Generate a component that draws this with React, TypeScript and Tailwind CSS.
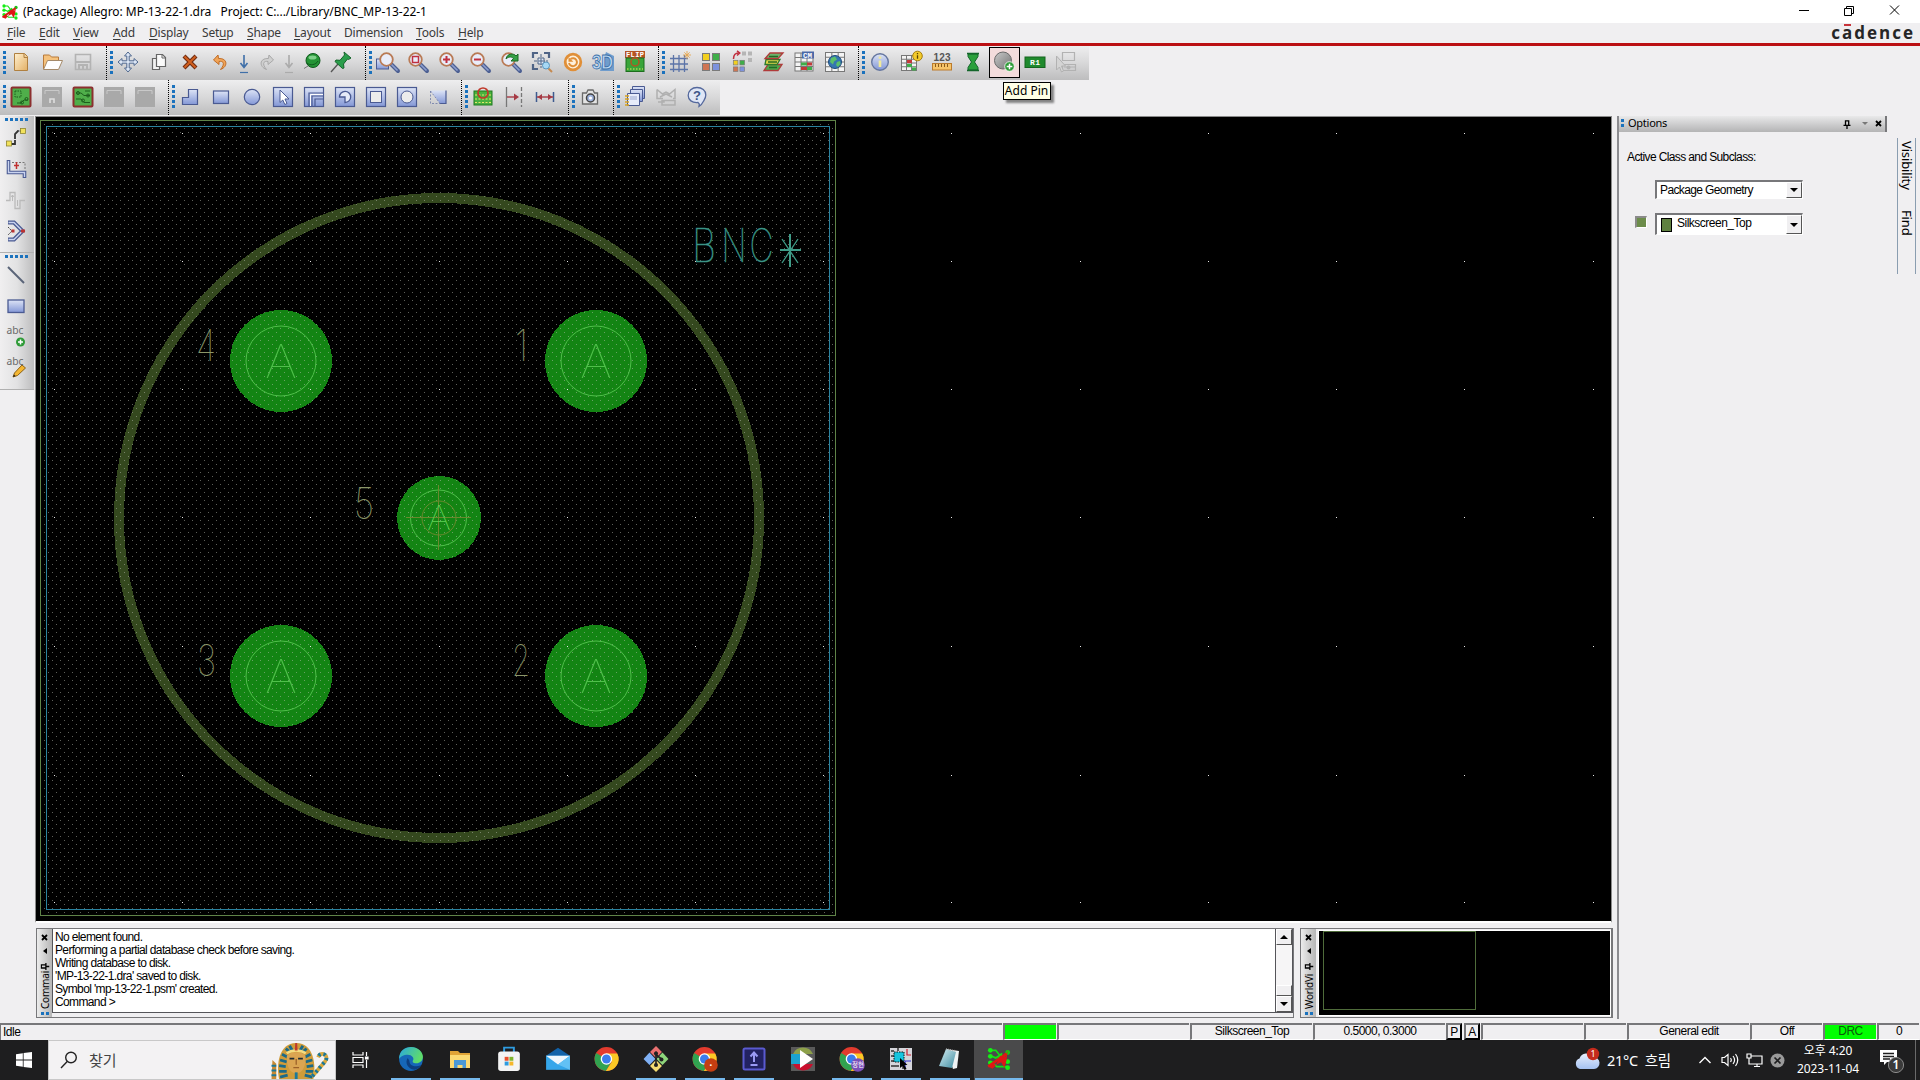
import React from "react";

type Kids = { children?: React.ReactNode };

/* ---------- shared icon scaffolding ---------- */

function Svg({ children, s = 24 }: Kids & { s?: number }) {
  return (
    <svg width={s} height={s} viewBox="0 0 24 24" fill="none" className="block shrink-0 overflow-visible">
      {children}
    </svg>
  );
}

const Defs = () => (
  <svg width="0" height="0" className="absolute">
    <defs>
      <linearGradient id="blu" x1="0" y1="0" x2="0" y2="1">
        <stop offset="0" stopColor="#dde4f6" />
        <stop offset="1" stopColor="#8397d6" />
      </linearGradient>
      <linearGradient id="tan" x1="0" y1="0" x2="1" y2="1">
        <stop offset="0" stopColor="#fff0cf" />
        <stop offset="1" stopColor="#e3b066" />
      </linearGradient>
      <linearGradient id="gry" x1="0" y1="0" x2="1" y2="1">
        <stop offset="0" stopColor="#c9c9c9" />
        <stop offset="1" stopColor="#757575" />
      </linearGradient>
      <linearGradient id="edge" x1="0" y1="0" x2="1" y2="0.4">
        <stop offset="0" stopColor="#2aa7e0" />
        <stop offset="1" stopColor="#5fdc6a" />
      </linearGradient>
      <linearGradient id="note" x1="0" y1="0" x2="1" y2="1">
        <stop offset="0" stopColor="#d7f0f5" />
        <stop offset="1" stopColor="#3e8ca0" />
      </linearGradient>
      <linearGradient id="cloud" x1="0" y1="0" x2="0" y2="1">
        <stop offset="0" stopColor="#e9f0fd" />
        <stop offset="1" stopColor="#a5c2f2" />
      </linearGradient>
    </defs>
  </svg>
);

const B = "#4a5a92";

const Lens = ({ children }: Kids) => (
  <>
    <path d="M14.5 14.5L21 21" stroke="#4c5f92" strokeWidth="4" strokeLinecap="round" />
    <path d="M14.5 14.5L20.5 20.5" stroke="#8ea0cf" strokeWidth="1.6" />
    <circle cx="9.5" cy="9.5" r="6.3" fill="#e9edfa" stroke="#b97a55" strokeWidth="1.8" />
    {children}
  </>
);

const Board = ({ children }: Kids) => (
  <Svg>
    <rect x="2.5" y="2.5" width="19" height="19" rx="1" fill="#4fae4a" stroke="#8c2f2f" strokeWidth="2" />
    {children}
  </Svg>
);

const Gone = ({ children }: Kids) => (
  <Svg>
    <rect x="2" y="2" width="20" height="20" fill="#a9a9a9" />
    <path d="M5 9V5.5h14V9" stroke="#c9c9c9" />
    {children}
  </Svg>
);

const Tile = ({ children }: Kids) => (
  <Svg>
    <rect x="2.5" y="2.5" width="19" height="19" fill="url(#blu)" stroke={B} strokeWidth="1.2" />
    {children}
  </Svg>
);

const Table = ({ x = 3, y = 3, n = 18 }) => (
  <>
    <rect x={x} y={y} width={n} height={n} fill="#f4f4f4" stroke="#777" />
    <path
      d={`M${x} ${y + n / 4}h${n}M${x} ${y + n / 2}h${n}M${x} ${y + (3 * n) / 4}h${n}M${x + n / 3} ${y}v${n}M${x + (2 * n) / 3} ${y}v${n}`}
      stroke="#777"
    />
  </>
);

const Chip = ({ s = 24 }: { s?: number }) => (
  <Svg s={s}>
    <path d="M4 4h5l4 5h5M4 9l5 2 6-4M4 15h4l5-5M5 15l5 4h9M12 13l7 2" stroke="#14e014" strokeWidth="1.6" />
    <circle cx="4" cy="4" r="2.2" fill="#14f014" />
    <circle cx="4" cy="9.5" r="2.2" fill="#14f014" />
    <circle cx="4" cy="15.5" r="2.2" fill="#14f014" />
    <circle cx="20" cy="6" r="2.2" fill="#14c814" />
    <circle cx="20" cy="14.5" r="2.2" fill="#14f014" />
    <circle cx="20" cy="20" r="2.2" fill="#14f014" />
    <path d="M2 19l4-4 3 3 4-9 5 1 2-6-1 9-2 7-3-5-4 2-4 4z" fill="#e01515" />
    <path d="M2 19l17-12" stroke="#e01515" strokeWidth="2.4" />
  </Svg>
);

/* ---------- top toolbar icons ---------- */

const row1a = [
  <Svg><path d="M5.500 3.500h10l3 3v14h-13z" fill="url(#tan)" stroke="#b08040" /><path d="M15 3.500v4h4" stroke="#b08040" /></Svg>,
  <Svg><path d="M3.500 19V5h6l2 2h7v4" fill="#f5c27d" stroke="#b97a3a" /><path d="M3.500 19.500l4-9h15l-4 9z" fill="#fff" stroke="#a58a6a" /></Svg>,
  <Svg><path d="M4.500 4.500h15v15h-15z" stroke="#b3b3b3" strokeWidth="1.6" /><path d="M5 12h14M8 19v-4h8v4M12 16v3" stroke="#b3b3b3" strokeWidth="2" /></Svg>,
];

const moveIcon = (
  <Svg>
    <path d="M12 2l3.500 4h-2.300v4.800H18V8.500l4 3.500-4 3.500v-2.300h-4.800V18h2.300L12 22l-3.500-4h2.300v-4.800H6v2.300L2 12l4-3.500v2.300h4.800V6H8.500z" fill="#dce6f5" stroke="#50698f" />
  </Svg>
);
const copyIcon = (
  <Svg>
    <path d="M5.500 8.500h7v11h-7z" fill="#f2f2f2" stroke="#666" strokeWidth="1.200" />
    <path d="M9.500 4.500h6l3 3v9h-9z" fill="#fafafa" stroke="#666" strokeWidth="1.200" />
    <path d="M15 5v3h3" stroke="#666" />
  </Svg>
);
const deleteIcon = (
  <Svg>
    <path d="M6 6l12 12M18 6L6 18" stroke="#6f2a10" strokeWidth="4.200" />
    <path d="M6.500 6.500l11 11M17.500 6.500l-11 11" stroke="#d2601f" strokeWidth="2" />
  </Svg>
);
const Curl = ({ flip = false }) => (
  <Svg>
    <g transform={flip ? "translate(24 0) scale(-1 1)" : undefined}>
      <path d="M9 5L4.500 10 10 14.500v-3c5-1 6 3 1.500 8C19 17 19 8 9.500 8.500z" fill={flip ? "#cfcfcf" : "#f0a458"} stroke={flip ? "#a8a8a8" : "#c06c26"} />
    </g>
  </Svg>
);
const Drop = ({ c = "#3f6fa8" }) => (
  <Svg>
    <path d="M12 5v12M8.500 13l3.500 4.500 3.500-4.500" stroke={c} strokeWidth="1.600" />
    <path d="M8 22.500h8" stroke={c} strokeWidth="1.200" />
  </Svg>
);
const pinRound = (
  <Svg>
    <circle cx="13" cy="10.500" r="7" fill="#249435" stroke="#0f5a1d" />
    <ellipse cx="12.500" cy="7.500" rx="4" ry="2" fill="#7fd08a" />
    <path d="M7 13c3 3 9 2 11-2" stroke="#0f5a1d" />
    <path d="M8 16l-4 2.500" stroke="#777" />
  </Svg>
);
const pinSlant = (
  <Svg>
    <path d="M9 14L2 22" stroke="#555" strokeWidth="1.400" />
    <path d="M15 2l7 6-2.500 1.500-1-.5-4 5 .5 4-1.500.5-7.500-7 1-1.500 4 .3L15.500 5z" fill="#2a9d4b" stroke="#14642a" />
  </Svg>
);

const zoomIcons = [
  <Svg><rect x="1.500" y="9" width="12" height="10" fill="url(#blu)" stroke={B} /><g transform="translate(2 0)"><Lens /></g></Svg>,
  <Svg><Lens><rect x="6.500" y="6.500" width="6" height="6" stroke="#c03040" strokeWidth="1.500" /></Lens></Svg>,
  <Svg><Lens><path d="M9.500 6v7M6 9.500h7" stroke="#c03040" strokeWidth="2" /></Lens></Svg>,
  <Svg><Lens><path d="M6 9.500h7" stroke="#c03040" strokeWidth="2" /></Lens></Svg>,
  <Svg><Lens /><path d="M3 10c1-6 8-6 10-3l2-2v7H8l2.500-2.500C8 7 5 8 3 10z" fill="#35a045" stroke="#186a25" transform="translate(4 -1)" /></Svg>,
  <Svg>
    <path d="M3 8V3h5M14 3h5v5M3 14v5h5" stroke="#4f6486" strokeWidth="2.200" />
    <path d="M11 4v14M4 11h14" stroke="#4f6486" strokeWidth="1" strokeDasharray="3 1" />
    <path d="M8 8h6v6H8z" fill="#dfe8f5" stroke="#4f6486" /><path d="M11 8.500v5M8.500 11h5" stroke="#4f6486" />
    <path d="M18 18l4 4" stroke="#c58a50" strokeWidth="2" /><circle cx="16" cy="15.500" r="3.500" fill="#a6d8f5" stroke="#5b95bd" />
  </Svg>,
  <Svg>
    <circle cx="12" cy="12" r="7.800" fill="#fdf0dc" stroke="#e08f38" strokeWidth="2.800" />
    <path d="M9.500 9a4 4 0 1 1-1.500 4" stroke="#e08f38" strokeWidth="1.900" /><path d="M7.500 7v4.800h4.800z" fill="#e08f38" />
  </Svg>,
  <Svg>
    <path d="M14 2l8 4v15H8z" fill="#6f9ccc" />
    <text x="0" y="19" fontSize="20" fontWeight="700" fontFamily="Liberation Sans, sans-serif" textLength="21" lengthAdjust="spacingAndGlyphs" fill="#bcd8f2" stroke="#3c70a8" strokeWidth="0.900">3D</text>
  </Svg>,
  <Svg>
    <rect x="2" y="1" width="20" height="7" fill="#b55424" />
    <text x="3" y="7.200" fontSize="7" fontWeight="700" fontFamily="Liberation Mono, monospace" textLength="18" fill="#fff">FLIP</text>
    <rect x="3" y="8" width="18" height="13.500" fill="#3aa53a" stroke="#1d6e1d" />
    <circle cx="12" cy="12" r="4" stroke="#b55424" strokeWidth="1.500" /><path d="M4 19h16" stroke="#e8e85a" strokeDasharray="1.500 1.500" />
  </Svg>,
];

const Squares = () => (
  <>
    <rect x="3.500" y="3.500" width="7" height="7" fill="#f2cf1e" stroke="#7a7a7a" />
    <rect x="13.500" y="3.500" width="7" height="7" fill="#3fae49" stroke="#7a7a7a" />
    <rect x="3.500" y="13.500" width="7" height="7" fill="#cf7552" stroke="#7a7a7a" />
    <rect x="13.500" y="13.500" width="7" height="7" fill="#7d92dd" stroke="#7a7a7a" />
  </>
);

const gridIcons = [
  <Svg><path d="M2 8.500h18M2 14h18M2 19.500h18M5.500 5v17M11 5v17M16.500 5v17" stroke="#5c74a8" strokeWidth="1.300" /><path d="M19 1v8M15 5h8M16.300 2.300l5.400 5.400M21.700 2.300l-5.400 5.400" stroke="#e8a850" strokeWidth="0.900" /></Svg>,
  <Svg><Squares /></Svg>,
  <Svg>
    <g transform="translate(1 8) scale(.66)"><Squares /></g>
    <path d="M12 1.500h4v4h-4zM18 1.500h4v4h-4zM18 8h4v4h-4z" fill="#b5b5b5" />
    <path d="M3.500 9c0-4 2-6 5-6M7 .8L9.800 3 7 5.500" stroke="#c03040" strokeWidth="1.500" />
  </Svg>,
  <Svg>
    <path d="M7 14.500h14l-4 6H3z" fill="#4da74d" stroke="#b03a3a" strokeWidth="1.300" />
    <path d="M5 9.500h14l-3 5H4z" fill="#e4d64a" stroke="#2c7a2c" strokeWidth="1.300" />
    <path d="M9 3h13l-5 5.500H4z" fill="#6db36d" stroke="#b03a3a" strokeWidth="1.300" />
    <path d="M8 6.500h9M7 12h9M8 17.500h8" stroke="#226a22" strokeWidth="1.300" />
  </Svg>,
  <Svg>
    <Table />
    <rect x="10" y="1.500" width="12" height="7" fill="#4a68a8" />
    <text x="11" y="7.800" fontSize="7.500" fontWeight="700" fontFamily="Liberation Mono, monospace" fill="#fff">CM</text>
    <path d="M9 12.500h6v3H9zM15 17h5v3h-5z" fill="#3fae49" /><path d="M15 12.500h5v3h-5zM9 17h6v3H9z" fill="#c23a3a" />
  </Svg>,
  <Svg><Table x={2.5} y={2.5} n={19} /><circle cx="12" cy="12" r="6.500" fill="#3576b0" stroke="#1d4b7c" /><path d="M8 8l4-1.500 2 3-3 2-1 3-3-2.500zM14 12l3-1 .5 3-2.500 3-2-2z" fill="#5cc06a" /></Svg>,
];

const infoBadge = (
  <>
    <circle cx="18.500" cy="6" r="4.800" fill="#f3cb2b" stroke="#a57e10" />
    <path d="M18.500 5.300v3.500M18.500 3v1.300" stroke="#5a4300" strokeWidth="1.300" />
  </>
);

const infoIcons = [
  <Svg><circle cx="12" cy="12" r="8.300" fill="url(#blu)" stroke="#66779f" strokeWidth="1.400" /><path d="M12 10.500v6.500M12 6.500v2.300" stroke="#f1ea9a" strokeWidth="2.600" /></Svg>,
  <Svg><Table x={2.500} y={5.500} n={15} /><path d="M8 14h5v3H8zM13 17.500h4v3h-4z" fill="#3fae49" /><path d="M8 10h5v3H8z" fill="#c23a3a" />{infoBadge}</Svg>,
  <Svg>
    <text x="3.500" y="11" fontSize="10" fontWeight="700" fontFamily="Liberation Sans, sans-serif" textLength="17" fill="#555">123</text>
    <rect x="2.500" y="13.500" width="19" height="6.500" fill="#f7c469" stroke="#bb7b2c" /><path d="M5.500 14v3M8.500 14v3M11.500 14v3M14.500 14v3M17.500 14v3" stroke="#8a5a1c" />
  </Svg>,
  <Svg><path d="M7 4h10v2.500L13.500 12l3.500 5.500V20H7v-2.500L10.500 12 7 6.500z" fill="#2aa03c" stroke="#13662a" /><path d="M6 3.500h12M6 20.500h12" stroke="#13662a" strokeWidth="1.600" /></Svg>,
];

const addPinIcon = (
  <Svg>
    <circle cx="11" cy="10.500" r="8.500" fill="url(#gry)" stroke="#6a6a6a" />
    <circle cx="17.500" cy="16.500" r="4.800" fill="#2f9b38" stroke="#fff" strokeWidth="0.800" />
    <path d="M17.500 13.700v5.600M14.700 16.500h5.600" stroke="#fff" strokeWidth="1.500" />
  </Svg>
);
const refdesIcon = (
  <Svg>
    <rect x="2" y="7" width="20" height="10.500" fill="#1f8a2d" stroke="#15651f" />
    <text x="7" y="15" fontSize="8" fontWeight="700" fontFamily="Liberation Mono, monospace" textLength="10" fill="#fff">R1</text>
  </Svg>
);
const hdlIcon = (
  <Svg>
    <path d="M8.500 2.500h12v8h-12zM8.500 14.500h13v6h-13z" stroke="#b2b2b2" strokeWidth="1.200" />
    <path d="M2.500 6v14l3-3 2 5 2-1-2-5h4zM10 17h11" fill="#d4d4d4" stroke="#b2b2b2" /><circle cx="14.500" cy="17.500" r="2" fill="#b2b2b2" />
  </Svg>
);

/* ---------- second toolbar icons ---------- */

const modeIcons = [
  <Board><path d="M6 6h6v6H6z" stroke="#1d5f1d" strokeDasharray="1.500 1" /><path d="M8 18h4l3-3h4" stroke="#1d5f1d" /><circle cx="13" cy="17.500" r="1.500" stroke="#1d5f1d" /><circle cx="17.500" cy="14" r="1.500" stroke="#1d5f1d" /></Board>,
  <Gone><path d="M10 18v-4h4v4" stroke="#dedede" strokeWidth="1.600" /></Gone>,
  <Board><path d="M5 8h5l3 2.500h6M5 14h5l3 3.500h6M14 6h5" stroke="#1d5f1d" /><circle cx="7" cy="8" r="1.500" stroke="#1d5f1d" /><circle cx="17" cy="10.500" r="1.500" stroke="#1d5f1d" /><circle cx="12" cy="15.500" r="1.500" stroke="#1d5f1d" /></Board>,
  <Gone />,
  <Gone />,
];

const shapeIcons = [
  <Svg><path d="M4.500 19.500v-7h6v-8h9v15z" fill="url(#blu)" stroke={B} strokeWidth="1.200" /></Svg>,
  <Svg><rect x="4.500" y="6" width="15" height="12.500" fill="url(#blu)" stroke={B} strokeWidth="1.200" /></Svg>,
  <Svg><circle cx="12" cy="12" r="7.700" fill="url(#blu)" stroke={B} strokeWidth="1.200" /></Svg>,
  <Tile><path d="M9 5v12.500l2.800-2.500 2 4.500 2.200-1-2-4.500H18z" fill="#fff" stroke={B} /></Tile>,
  <Tile><path d="M7 21V8h14M10 21V11h11M13 21v-7h8" stroke={B} strokeWidth="1.200" /><path d="M8.500 21V9.500H21" stroke="#fff" /></Tile>,
  <Tile><path d="M12 12H6.500a5.600 5.600 0 1 1 5.500 5.500z" fill="#e6ebf8" stroke={B} strokeWidth="1.300" /></Tile>,
  <Tile><rect x="6.500" y="6.500" width="11" height="11" fill="#ececec" stroke={B} /></Tile>,
  <Tile><circle cx="12" cy="12" r="6" fill="#ececec" stroke={B} /></Tile>,
  <Svg><path d="M4.500 5.500h15.500v13H14z" fill="url(#blu)" /><path d="M20 5.500v13h-6" stroke={B} strokeWidth="1.200" /><path d="M4.500 6v12.500H14M4.500 6l9.500 12.500" stroke="#6d7aa6" strokeWidth="0.800" strokeDasharray="2 1.500" /></Svg>,
];

const dimIcons = [
  <Svg><rect x="3" y="6" width="18" height="14" fill="#49b13f" stroke="#1f7a1f" /><path d="M4 17.500h16M4 10h16M4 14h16" stroke="#e3e86a" strokeDasharray="2 1.500" /><circle cx="12" cy="8" r="5" stroke="#c0392b" strokeWidth="1.700" /></Svg>,
  <Svg><path d="M4.500 2v20" stroke="#777" strokeWidth="1.300" /><path d="M19.500 2v20" stroke="#777" strokeWidth="1.300" strokeDasharray="4 2" /><path d="M5 12h10" stroke="#a63a44" strokeWidth="1.400" /><path d="M12 8.500l5 3.500-5 3.500z" fill="#a63a44" /></Svg>,
  <Svg><path d="M3.500 7v10M20.500 7v10" stroke="#3d5a8e" strokeWidth="1.500" /><path d="M4 12h16" stroke="#a63a44" strokeWidth="1.400" /><path d="M9 9l-4.500 3L9 15zM15 9l4.500 3-4.500 3z" fill="#a63a44" /></Svg>,
];

const cameraIcon = (
  <Svg><path d="M4.500 8h4l1.500-3h5l1.500 3h3v11h-15z" fill="#e3e3e3" stroke="#6b6b6b" strokeWidth="1.300" /><circle cx="12.500" cy="13" r="4" fill="#9fb3dc" stroke="#444" strokeWidth="1.500" /><circle cx="12.500" cy="13" r="1.600" fill="#fff" /></Svg>
);

const helpIcons = [
  <Svg>
    <path d="M9.500 1.500h12v12h-12z" fill="url(#blu)" stroke={B} /><path d="M7.500 4.500h12v12h-12z" fill="url(#blu)" stroke={B} />
    <path d="M4.500 8.500h12v12h-12z" fill="#e6ebfa" stroke={B} /><path d="M7 12h7M7 14h7" stroke="#9aa7cf" /><path d="M2 11h4M2 14h4M2 17h4M2 20h4" stroke="#d9a21e" strokeWidth="1.600" />
  </Svg>,
  <Svg><path d="M3 4.500v9h6M3 4.500l5.500 4.500L12 7l3.500 2L21 4.500v9h-2M6 12l6-3 6 3" stroke="#b0b0b0" strokeWidth="1.500" /><path d="M4 17h6v-2M8 15.500h13V20H8z" stroke="#b0b0b0" strokeWidth="1.500" /></Svg>,
  <Svg><path d="M12 2.500c5 0 8.800 3 8.800 7.500 0 3-1 4-2.500 6.500-1 2-2 4-4.300 5 .8-2 .5-3-1-4C7 18 3.200 15 3.200 10.500 3.200 6 7 2.500 12 2.500z" fill="#dfe6f6" stroke="#54689c" strokeWidth="1.300" /><text x="8" y="15" fontSize="13" fontWeight="700" fontFamily="Liberation Sans, sans-serif" fill="#3c5488">?</text></Svg>,
];

/* ---------- left toolbar icons ---------- */

const Abc = () => (
  <text x="2.500" y="9" fontSize="10.500" fontFamily="Noto Sans, sans-serif" fill="#6a6a6a" textLength="17" lengthAdjust="spacingAndGlyphs">abc</text>
);

const routeIcons = [
  <Svg><path d="M5 18h6V8l3-3h7" stroke="#333" strokeWidth="1.800" strokeDasharray="10 1" /><rect x="2.500" y="15" width="5" height="5" fill="#f2e25c" stroke="#8f8530" strokeWidth="0.800" /><rect x="16.500" y="2.500" width="5" height="5" fill="#f2e25c" stroke="#8f8530" strokeWidth="0.800" /></Svg>,
  <Svg><path d="M4.500 3v12.500h16V21" stroke={B} strokeWidth="3.600" /><path d="M4.500 4v11.500h16V20" stroke="#c9d3f0" strokeWidth="1.400" /><path d="M8 5.500h13v7" stroke="#777" strokeDasharray="2 1.500" /><path d="M12.500 5v7M10 8.500h5" stroke="#c03030" strokeWidth="1.500" /></Svg>,
  <Svg><path d="M2 12.500h4V4.500h5v16h5v-8h5" stroke="#bababa" strokeWidth="1.300" /><path d="M8.500 13V7M7 9l1.500-2L10 9M13.500 12v6" stroke="#bababa" /></Svg>,
  <Svg><path d="M4 3.500h6l8.500 8.500L10 20.500H4" stroke={B} strokeWidth="4" /><path d="M4.500 3.500H10l8.500 8.500L10 20.500H4.500" stroke="#c9d3f0" strokeWidth="1.400" /><path d="M4 8l4 4-4 4" stroke="#444" strokeDasharray="2 1" /><rect x="7.500" y="10.500" width="3" height="3" fill="#b33" /><rect x="17" y="10.500" width="4" height="3" fill="#b33" /></Svg>,
];

const drawIcons = [
  <Svg><path d="M4 4l16 16" stroke="#5a6478" strokeWidth="2" /></Svg>,
  <Svg><rect x="4" y="6" width="16" height="12.500" fill="url(#blu)" stroke={B} strokeWidth="1.300" /></Svg>,
  <Svg><Abc /><circle cx="16.500" cy="17" r="4.500" fill="#2f9b38" /><path d="M16.500 14.500v5M14 17h5" stroke="#fff" strokeWidth="1.500" /></Svg>,
  <Svg><Abc /><path d="M9 21l1.500-4L18 9l3.500 3-8 7.500z" fill="#f5b732" stroke="#8c6114" /><path d="M9 21l1-2.500 1.500 1.500z" fill="#222" /></Svg>,
];

/* ---------- toolbar layout ---------- */

function Slot({ children, w = "w-[31px]" }: Kids & { w?: string }) {
  return <div className={`flex h-full shrink-0 items-center justify-center ${w}`}>{children}</div>;
}

const Grip = () => (
  <div className="flex h-full w-[5.5px] shrink-0 flex-col items-start justify-center gap-[2px] pl-[3px]">
    {[0, 1, 2, 3, 4].map((i) => (
      <div key={i} className="h-[3px] w-[3px] bg-[#1b72bd]" />
    ))}
  </div>
);

function Group({ children, w, last = false }: Kids & { w: string; last?: boolean }) {
  return (
    <div className={`flex h-full shrink-0 items-center pb-[2px] ${w} ${last ? "" : "border-r border-dotted border-black"}`}>
      <Grip />
      {children}
    </div>
  );
}

const bar = "flex bg-gradient-to-b from-[#eeeeef] via-[#d8d8d9] to-[#bdbdbe]";

const VGroup = ({ icons, h }: { icons: React.ReactNode[]; h: string }) => (
  <div className={`flex w-[34px] flex-col border-b border-[#b0b0b0] bg-gradient-to-r from-[#f0eff0] via-[#e2e2e3] to-[#bdbdbe] ${h}`}>
    <div className="flex h-[6px] shrink-0 items-center gap-[2px] pl-[5px]">
      {[0, 1, 2, 3, 4].map((i) => (
        <div key={i} className="h-[3px] w-[3px] bg-[#1b72bd]" />
      ))}
    </div>
    {icons.map((ic, i) => (
      <div key={i} className="flex h-[31px] w-[31px] shrink-0 items-center justify-center">{ic}</div>
    ))}
  </div>
);

/* ---------- design canvas ---------- */

function Label({ x, y, w, h, c, children }: { x: number; y: number; w: number; h: number; c: string; children: string }) {
  return (
    <text x={x} y={y} fontFamily="Inter, sans-serif" fontWeight={100} fontSize={h / 0.727} textLength={w} lengthAdjust="spacingAndGlyphs" fill={c}>
      {children}
    </text>
  );
}

const minorX = [54, 182, 310, 439, 567, 695, 823, 951, 1080, 1208, 1336, 1464, 1593];
const minorY = [133, 261, 389, 517, 646, 775, 902];
const pads = [
  { n: "4", x: 281, y: 361, lx: 196, lw: 20 },
  { n: "1", x: 596, y: 361, lx: 515, lw: 13 },
  { n: "3", x: 281, y: 676, lx: 197, lw: 19 },
  { n: "2", x: 596, y: 676, lx: 512, lw: 18 },
];

const Canvas = () => (
  <svg width="1575" height="804" viewBox="36 117 1575 804" className="block bg-black">
    <defs>
      <pattern id="dots" width="8" height="8" patternUnits="userSpaceOnUse">
        <rect x="0" y="0" width="1" height="1" fill="#bcc0b4" fillOpacity="0.5" />
        <rect x="4" y="4" width="1" height="1" fill="#bcc0b4" fillOpacity="0.5" />
      </pattern>
    </defs>
    <circle cx="439" cy="518" r="320" fill="none" stroke="#34481e" strokeWidth="10" shapeRendering="crispEdges" />
    {pads.map((p) => (
      <circle key={p.n} cx={p.x} cy={p.y} r="51" fill="#138413" shapeRendering="crispEdges" />
    ))}
    <circle cx="439" cy="518" r="42" fill="#138413" shapeRendering="crispEdges" />
    <rect x="41" y="121" width="794" height="794" fill="url(#dots)" shapeRendering="crispEdges" />
    <rect x="40.500" y="120.500" width="795" height="795" fill="none" stroke="#5f8348" />
    <rect x="46.500" y="126.500" width="783" height="783" fill="none" stroke="#2a83a0" />
    {minorY.map((y) => minorX.map((x) => <rect key={`${x}-${y}`} x={x} y={y} width="1" height="1" fill="#e8e8e8" />))}
    {pads.map((p) => (
      <g key={p.n}>
        <circle cx={p.x} cy={p.y} r="35" fill="none" stroke="#4fc04a" />
        <Label x={p.x - 16} y={p.y + 17} w={32} h={34} c="#4fc04a">A</Label>
        <g stroke="#8a9668" strokeWidth="0.200">
          <Label x={p.lx} y={p.y} w={p.lw} h={32} c="#8a9668">{p.n}</Label>
        </g>
      </g>
    ))}
    <circle cx="438.500" cy="518" r="28" fill="none" stroke="#4fc04a" />
    <circle cx="439" cy="518" r="17" fill="none" stroke="#6a8a2e" />
    <path d="M406 517.500h65M438.500 485v65" stroke="#6a8a2e" />
    <Label x={427} y={530} w={24} h={25} c="#5fd055">A</Label>
    <g stroke="#8a9668" strokeWidth="0.200">
      <Label x={354} y={519} w={20} h={32} c="#8a9668">5</Label>
    </g>
    <g stroke="#2f8a80" strokeWidth="0.600">
      <text y="262" fontFamily="Inter, sans-serif" fontWeight={100} fontSize="46" fill="#4aa08e">
        <tspan x="692" textLength="24" lengthAdjust="spacingAndGlyphs">B</tspan>
        <tspan x="721.500" textLength="25" lengthAdjust="spacingAndGlyphs">N</tspan>
        <tspan x="749.500" textLength="24" lengthAdjust="spacingAndGlyphs">C</tspan>
      </text>
    </g>
    <path d="M790 234v33M780 250h21" stroke="#3f9c88" strokeWidth="2" />
    <path d="M782 239l16 24M798 239l-16 24" stroke="#3f9c88" strokeWidth="1.300" />
  </svg>
);

/* ---------- lower docks ---------- */

const PinGlyph = () => (
  <svg width="8" height="9" viewBox="0 0 8 9" stroke="#000" strokeWidth="1.300" fill="none"><path d="M2.500 5V.8h3.200V5M.5 5.400h7M4 5v4" /></svg>
);
const CloseGlyph = () => (
  <svg width="7" height="7" viewBox="0 0 7 7" stroke="#000" strokeWidth="1.800"><path d="M1 1l5 5M6 1L1 6" /></svg>
);

const DockStrip = ({ label }: { label: string }) => (
  <div className="flex w-[15px] shrink-0 flex-col items-center bg-gradient-to-r from-[#ececec] to-[#b6b6b6] pt-[5px]">
    <CloseGlyph />
    <div className="mt-[7px] h-0 w-0 border-y-[3px] border-r-[4px] border-y-transparent border-r-black" />
    <div className="mt-[8px] -rotate-90"><PinGlyph /></div>
    <div className="mt-px flex h-[37px] w-[14px] rotate-180 items-center whitespace-nowrap text-[10px] leading-[14px] tracking-[-0.2px] [writing-mode:vertical-rl]">{label}</div>
    <div className="mt-[3px] flex gap-[2px]">
      <div className="h-[3px] w-[3px] bg-[#1b72bd]" />
      <div className="h-[3px] w-[3px] bg-[#1b72bd]" />
    </div>
  </div>
);

const raised = "border border-t-white border-l-white border-r-[#555] border-b-[#555] bg-[#f0eff1]";

const Command = () => (
  <div className="flex h-[90px] w-[1258px] border border-[#77777a] bg-[#f0eff1]">
    <DockStrip label="Commai" />
    <div className="flex h-[84px] flex-1 border border-t-0 border-[#55555a] bg-white">
      <div className="flex-1 pl-[2px] pt-[2px] font-['Liberation_Sans',sans-serif] text-[12px] leading-[13px] tracking-[-0.63px] text-black">
        {["No element found.", "Performing a partial database check before saving.", "Writing database to disk.", "'MP-13-22-1.dra' saved to disk.", "Symbol 'mp-13-22-1.psm' created.", "Command >"].map((l) => (
          <div key={l}>{l}</div>
        ))}
      </div>
      <div className="flex w-[17px] flex-col border-l border-[#55555a] bg-[#f6f5f6]">
        <div className={`flex h-[16px] items-center justify-center ${raised}`}><div className="h-0 w-0 border-x-[4px] border-b-[4px] border-x-transparent border-b-black" /></div>
        <div className="flex-1" />
        <div className={`h-[11px] ${raised}`} />
        <div className={`flex h-[16px] items-center justify-center ${raised}`}><div className="h-0 w-0 border-x-[4px] border-t-[4px] border-x-transparent border-t-black" /></div>
      </div>
    </div>
  </div>
);

const WorldView = () => (
  <div className="flex h-[90px] w-[313px] border border-r-2 border-[#77777a] bg-[#f0eff1]">
    <DockStrip label="WorldVi" />
    <div className="ml-[2px] mt-[1px] h-[86px] flex-1 border border-white bg-black">
      <div className="ml-[4px] h-[79px] w-[153px] border border-[#4f6c3a]" />
    </div>
  </div>
);

/* ---------- options dock ---------- */

const Combo = ({ children, h }: Kids & { h: string }) => (
  <div className={`flex w-[148px] border border-t-2 border-l-2 border-[#77777a] border-r-white border-b-white bg-white ${h}`}>
    <div className="flex flex-1 items-center pl-[2px]">{children}</div>
    <div className={`flex w-[16px] items-center justify-center ${raised}`}>
      <div className="h-0 w-0 border-x-[4px] border-t-[4px] border-x-transparent border-t-black" />
    </div>
  </div>
);

const Options = () => (
  <div className="flex h-[903px] w-[302px] border-l-2 border-[#8c8c90] font-['Liberation_Sans',sans-serif] text-[12px] text-black">
    <div className="w-[268px]">
      <div className="flex h-[16px] items-center border-r-2 border-[#77777a] bg-gradient-to-b from-[#e9e9ea] to-[#b4b4b5] pb-[2px] pl-[2px]">
        <div className="flex flex-col gap-[2px]">
          <div className="h-[3px] w-[3px] bg-[#1b72bd]" />
          <div className="h-[3px] w-[3px] bg-[#1b72bd]" />
        </div>
        <span className="ml-[4px] font-['Noto_Sans',sans-serif] text-[11px] leading-[12px] tracking-[-0.25px]">Options</span>
        <div className="ml-auto mt-[3px]"><PinGlyph /></div>
        <div className="ml-[11px] h-0 w-0 border-x-[3px] border-t-[3px] border-x-transparent border-t-[#777]" />
        <div className="ml-[7px] mr-[3px]"><CloseGlyph /></div>
      </div>
      <div className="mt-[17px] pl-[8px] leading-[16px] tracking-[-0.62px]">Active Class and Subclass:</div>
      <div className="mt-[15px] pl-[36px]">
        <Combo h="h-[19px]"><span className="pl-px tracking-[-0.62px]">Package Geometry</span></Combo>
      </div>
      <div className="mt-[14px] flex pl-[16px]">
        <div className="mr-[8px] mt-[3px] h-[12px] w-[12px] border-2 border-r border-b border-[#8a8a8a] border-r-white border-b-white bg-[#6c8c4a]" />
        <Combo h="h-[22px]">
          <div className="ml-[2px] h-[14px] w-[11px] border border-black bg-[#5f8040]" />
          <span className="-mt-[3px] ml-[5px] tracking-[-0.5px]">Silkscreen_Top</span>
        </Combo>
      </div>
    </div>
    <div className="ml-[10px] mt-[22px] flex w-[19px] flex-col font-['Noto_Sans',sans-serif] text-[13px] leading-[16px] tracking-[-0.15px]">
      <div className="h-[68px] border-y border-l border-[#8a9db0] pt-[3px] [writing-mode:vertical-rl]">Visibility</div>
      <div className="h-[68px] border-y border-l border-[#8a9db0] pt-[4px] [writing-mode:vertical-rl]">Find</div>
    </div>
  </div>
);

/* ---------- status bar ---------- */

const cell = "flex h-full shrink-0 items-center justify-center border-t-2 border-l-2 border-[#77777a] border-b border-b-white pb-[2px]";

const Status = () => (
  <div className="flex h-[17px] gap-[1px] font-['Liberation_Sans',sans-serif] text-[12px] leading-none tracking-[-0.5px] text-black">
    <div className="flex h-full w-[1002px] items-center border-l border-t-2 border-[#77777a] pb-[2px] pl-[2px]">Idle</div>
    <div className={`${cell} w-[53px] bg-[#00ff00]`} />
    <div className={`${cell} w-[132px]`} />
    <div className={`${cell} w-[122px]`}>Silkscreen_Top</div>
    <div className={`${cell} w-[132px]`}>0.5000, 0.3000</div>
    <div className="flex h-full w-[16px] items-center justify-center border-2 border-[#77777a] border-r-black border-b-black">P</div>
    <div className="ml-[1px] flex h-full w-[16px] items-center justify-center border-2 border-[#77777a] border-r-black border-b-black">A</div>
    <div className={`${cell} w-[102px]`} />
    <div className={`${cell} w-[42px]`} />
    <div className={`${cell} w-[122px]`}>General edit</div>
    <div className={`${cell} w-[72px]`}>Off</div>
    <div className={`${cell} w-[53px] bg-[#00ff00] text-[#0a5a0a]`}>DRC</div>
    <div className={`${cell} w-[42px]`}>0</div>
  </div>
);

/* ---------- taskbar ---------- */

const Chrome = ({ badge, text }: { badge?: string; text?: string }) => (
  <Svg s={26}>
    <circle cx="11.500" cy="12" r="11" fill="#e33b2e" />
    <path d="M11.500 12L2 6.500A11 11 0 0 0 11 23l5-8.500z" fill="#31a350" />
    <path d="M11.500 12l5 2.500L11 23A11 11 0 0 0 21.500 7h-10z" fill="#fbc825" />
    <circle cx="11.500" cy="12" r="5.300" fill="#fff" />
    <circle cx="11.500" cy="12" r="4.100" fill="#3b7ded" />
    {badge && <circle cx="17.500" cy="17.500" r="6.300" fill={badge} />}
    {text && <text x="17.500" y="19.800" fontSize="6" textAnchor="middle" fontFamily="Noto Sans CJK KR, sans-serif" fill="#fff">{text}</text>}
  </Svg>
);

const apps: { ic: React.ReactNode; on?: boolean; active?: boolean }[] = [
  {
    on: true,
    ic: (
      <Svg s={26}>
        <circle cx="12" cy="12" r="11" fill="#1667b8" />
        <path d="M1 12C1 4 7 1 12 1c7 0 11 5 11 9 0 4-3 6-6 6-3.500 0-4-1.500-3-3 1-2-1-5-5-5-4 0-7 2-8 4z" fill="url(#edge)" />
        <path d="M9 11c-3 4 0 10 6 11 3-.5 5-2 6.500-4.500-5 2.500-11 1-11-4z" fill="#0d3f80" />
      </Svg>
    ),
  },
  {
    on: true,
    ic: (
      <Svg s={24}>
        <path d="M2 4h8l2 2h10v5H2z" fill="#e0a336" /><path d="M2 8h20v13H2z" fill="#fbd972" /><path d="M6 21v-8h12v8h-3.500v-3h-5v3z" fill="#4a98d6" />
      </Svg>
    ),
  },
  {
    ic: (
      <Svg s={26}>
        <path d="M7.500 7V1.500h9V7" stroke="#2f9ce0" strokeWidth="1.800" /><rect x="2" y="5" width="20" height="18" rx="2.500" fill="#f4f4f4" />
        <path d="M8 10h3.600v3.600H8z" fill="#e8502c" /><path d="M12.400 10H16v3.600h-3.600z" fill="#7fb52c" /><path d="M8 14.400h3.600V18H8z" fill="#2f9ce0" /><path d="M12.400 14.400H16V18h-3.600z" fill="#f6b72a" />
      </Svg>
    ),
  },
  {
    ic: (
      <Svg s={26}><path d="M1 9l11-7.500L23 9v3H1z" fill="#1262a8" /><path d="M1 9h22v13H1z" fill="#35a6ea" /><path d="M1 9h22l-11 8z" fill="#eef6fc" /><path d="M12 17L23 9v13z" fill="#62c1f5" /></Svg>
    ),
  },
  { ic: <Chrome /> },
  {
    on: true,
    ic: (
      <Svg s={26}>
        <path d="M12 0l5.500 5.500L12 11 6.500 5.500z" fill="#ea7070" /><path d="M6 6l5.500 6L6 17.500.5 12z" fill="#7fb0f5" /><path d="M18 6l5.500 6-5.500 5.500-5.500-5.500z" fill="#8fd67c" /><path d="M12 13l5.500 5.500L12 24l-5.500-5.500z" fill="#f5dd72" />
        <path d="M12 5v13M12 8l5 4" stroke="#222" strokeWidth="1.500" /><circle cx="12" cy="7" r="1.900" fill="#222" /><circle cx="17" cy="12.500" r="1.900" fill="#222" /><circle cx="12" cy="17.500" r="1.900" fill="#222" />
      </Svg>
    ),
  },
  { on: true, ic: <Chrome badge="#c43e12" text="•" /> },
  {
    on: true,
    ic: (
      <Svg s={24}><rect x="1.500" y="1.500" width="21" height="21" rx="1.500" fill="#222262" stroke="#5a5ad0" strokeWidth="2" /><path d="M12 6v9M8.500 9.500L12 5.500l3.500 4M8.500 18h7" stroke="#9a9af5" strokeWidth="2" /></Svg>
    ),
  },
  {
    ic: (
      <Svg s={24}><path d="M0 0h24v24H0z" fill="#5a5a5a" /><path d="M2 7A11 11 0 0 1 22 7z" fill="#8da04a" /><path d="M0 7h11v10H0z" fill="#1ba3cf" /><path d="M2 17a11 11 0 0 0 20 0z" fill="#c8102e" /><path d="M9 3l13 9L9 21z" fill="#fff" /></Svg>
    ),
  },
  { on: true, ic: <Chrome badge="#7a4fb8" text="정현" /> },
  {
    on: true,
    ic: (
      <Svg s={24}><path d="M1 1h22v22H1z" fill="#d5d5da" /><path d="M2 4h3M2 9h3M2 14h3M2 19h8M9 1v3M14 17v5" stroke="#333" strokeWidth="1.500" /><path d="M5 5h10v10H5z" fill="#16c5df" stroke="#111" strokeDasharray="1.500 1" /><path d="M18 2v6h4" stroke="#c23" strokeWidth="1.200" /><path d="M16 22v-8h6" stroke="#33c" strokeWidth="1.200" /><path d="M11 11v10l2.500-2 2 4 2-1-2-4h3z" fill="#000" /></Svg>
    ),
  },
  {
    on: true,
    ic: <Svg s={24}><path d="M8 2l13 2-2 17-4 1z" fill="#eef3f4" /><path d="M8 2l10 3-4 16L1 19z" fill="url(#note)" /><path d="M8 2l10 2" stroke="#aaa" strokeWidth="1.500" strokeDasharray="1 1" /></Svg>,
  },
  { on: true, active: true, ic: <Chip s={26} /> },
];

const Pharaoh = () => (
  <svg width="62" height="38" viewBox="0 0 62 40" className="block">
    <path d="M2 20l4 4v16H1z" fill="#c98a32" /><path d="M1 26h5M1 31h5M1 36h5" stroke="#1b7899" strokeWidth="2" />
    <path d="M9 40C6 26 8 2 27 2s21 24 18 38z" fill="#cf9c3a" />
    <path d="M12 14l6 3M10 20l7 2M9 26l7 1M9 32l8 0M10 38l8-2M42 14l-6 3M44 20l-7 2M45 26l-7 1M45 32l-8 0M44 38l-8-2M16 8l5 4M38 8l-5 4M20 5l3 5M34 5l-3 5" stroke="#1b6a8a" strokeWidth="3" />
    <path d="M17 17c0-7 20-7 20 0 0 9-3 17-10 17S17 26 17 17z" fill="#dba552" />
    <path d="M17 13c5-4 15-4 20 0" stroke="#f4dc80" strokeWidth="2.500" fill="none" />
    <path d="M20 18.500h5M29 18.500h5" stroke="#1d2b33" strokeWidth="2" /><path d="M27 19v6M24 28h6" stroke="#9a5f28" strokeWidth="1.300" />
    <path d="M25.500 33h3v7h-3z" fill="#1b7899" /><path d="M26 2l2 0 .5 8h-3z" fill="#c0392b" />
    <path d="M44 37l13-15c6-7-4-12-7-5" stroke="#d9a83e" strokeWidth="4" fill="none" /><path d="M44 37l13-15c6-7-4-12-7-5" stroke="#1b7899" strokeWidth="4" strokeDasharray="2.500 3" fill="none" />
  </svg>
);

const Taskbar = () => (
  <div className="flex h-[40px] bg-[#1e1e1f] font-['Noto_Sans','Noto_Sans_CJK_KR',sans-serif] text-white">
    <div className="flex w-[48px] items-center justify-center">
      <svg width="16" height="16" viewBox="0 0 16 16" fill="#fff"><path d="M0 2.200L6.800 1.200V7.600H0zM7.600 1.100L16 0V7.600H7.600zM0 8.400H6.800V14.800L0 13.800zM7.600 8.400H16V16L7.600 14.900z" /></svg>
    </div>
    <div className="flex w-[288px] items-center border border-[#c8c8c8] bg-[#f3f2f3] pl-[11px] text-[#444]">
      <svg width="18" height="18" viewBox="0 0 18 18" fill="none" stroke="#222" strokeWidth="1.400"><circle cx="11" cy="6.500" r="5.300" /><path d="M7.200 10.500L1 17" /></svg>
      <span className="ml-[11px] font-['Noto_Sans_CJK_KR',sans-serif] text-[15px] leading-[20px]">찾기</span>
      <div className="ml-auto mr-[4px]"><Pharaoh /></div>
    </div>
    <div className="flex w-[50px] items-center justify-center pr-[1px]">
      <svg width="17" height="16" viewBox="0 0 17 16" fill="none" stroke="#fff" strokeWidth="1.200"><path d="M1 0v3h10V0M1 5.500h10v5H1zM1 16v-3h10v3M14.500 0v4M14.500 8v8" /><path d="M13.500 5h2.500v2h-2.500z" fill="#fff" /></svg>
    </div>
    {apps.map((a, i) => (
      <div key={i} className={`flex w-[49px] flex-col items-center ${a.active ? "bg-[#4a4a4b]" : ""}`}>
        <div className="flex h-[38px] items-center">{a.ic}</div>
        <div className={`h-[2px] ${a.active ? "w-[48px]" : "w-[40px]"} ${a.on ? "bg-[#76b9ed]" : ""}`} />
      </div>
    ))}
    <div className="ml-auto flex items-center">
      <svg width="26" height="24" viewBox="0 0 26 24" className="-mt-[2px]">
        <path d="M6 22a5.500 5.500 0 0 1-.5-10.500A7.500 7.500 0 0 1 19 10a6 6 0 0 1 1 12z" fill="url(#cloud)" />
        <circle cx="19" cy="7" r="6.200" fill="#c42b1c" />
        <text x="19" y="10.300" fontSize="9" textAnchor="middle" fill="#fff" fontFamily="Noto Sans, sans-serif">1</text>
      </svg>
      <span className="ml-[7px] w-[91px] whitespace-nowrap text-[14.500px] leading-[20px] tracking-[-0.3px]">21°C&nbsp; 흐림</span>
      <svg width="14" height="8" viewBox="0 0 14 8" fill="none" stroke="#fff" strokeWidth="1.400"><path d="M1.500 7L7 1.500 12.500 7" /></svg>
      <svg width="18" height="16" viewBox="0 0 18 16" fill="none" stroke="#fff" strokeWidth="1.200" className="ml-[9px]"><path d="M1 5.500h2.500L7 2.500v11L3.500 10.500H1zM9.500 6c1 1.300 1 2.700 0 4M12 4c2 2.500 2 5.500 0 8M14.500 2c3 4 3 8 0 12" /></svg>
      <svg width="17" height="15" viewBox="0 0 17 15" fill="none" stroke="#fff" strokeWidth="1.200" className="ml-[7px]"><path d="M5 3h11v8H3V6M8 13.500h6M11 11v2.500M1 1h4v4H1zM3 5v3" /></svg>
      <svg width="15" height="15" viewBox="0 0 15 15" className="ml-[7px]"><circle cx="7.500" cy="7.500" r="7" fill="#9a9a9a" /><path d="M4.500 4.500l6 6M10.500 4.500l-6 6" stroke="#1e1e1f" strokeWidth="1.700" /></svg>
      <div className="ml-[9px] w-[68px] whitespace-nowrap text-center text-[12px] leading-[18px] tracking-[-0.05px]">
        <div>오후 4:20</div>
        <div>2023-11-04</div>
      </div>
      <svg width="26" height="26" viewBox="0 0 26 26" className="ml-[17px] mt-[2px]">
        <path d="M1 2h17v12H8l-3 3v-3H1z" fill="#fff" /><path d="M4 5.500h11M4 8.500h11M4 11h7" stroke="#1e1e1f" strokeWidth="1.300" />
        <circle cx="17" cy="17" r="7.600" fill="#3a3a3a" stroke="#8a8a8a" /><text x="17" y="21.300" fontSize="12" fontWeight="600" textAnchor="middle" fill="#fff" fontFamily="Noto Sans, sans-serif">1</text>
      </svg>
      <div className="ml-[10px] mr-[4px] h-[40px] w-px bg-[#6a6a6a]" />
    </div>
  </div>
);

/* ---------- menu ---------- */

const menus: [string, string, string, string][] = [
  ["", "F", "ile", "w-[32px]"],
  ["", "E", "dit", "w-[34px]"],
  ["", "V", "iew", "w-[40px]"],
  ["", "A", "dd", "w-[36px]"],
  ["", "D", "isplay", "w-[53px]"],
  ["Set", "u", "p", "w-[45px]"],
  ["", "S", "hape", "w-[47px]"],
  ["", "L", "ayout", "w-[50px]"],
  ["Dimension", "", "", "w-[72px]"],
  ["", "T", "ools", "w-[42px]"],
  ["", "H", "elp", "w-[40px]"],
];

export default function App() {
  return (
    <div className="h-[1080px] w-[1920px] overflow-hidden bg-[#f0eff1] font-['Noto_Sans',sans-serif] text-black">
      <Defs />
      <div className="flex h-[23px] items-center bg-white">
        <div className="ml-[1px]"><Chip s={18} /></div>
        <span className="ml-[4px] whitespace-pre text-[12px] leading-[20px] tracking-[-0.045px]">(Package) Allegro: MP-13-22-1.dra   Project: C:.../Library/BNC_MP-13-22-1</span>
        <svg width="104" height="12" viewBox="0 0 104 12" fill="none" stroke="#000" strokeWidth="1" className="ml-auto mr-[18px] -mt-[3px]">
          <path d="M1 6.500h10M46.500 4.500h7v7h-7zM48.500 4.500v-2h7v7h-2M92 1.500l9 9M101 1.500l-9 9" />
        </svg>
      </div>
      <div className="flex h-[20px] items-center bg-[#f0eff1] pl-[7px] text-[12px] leading-[18px] tracking-[-0.2px] text-[#3a3a3a]">
        {menus.map(([a, u, b, w]) => (
          <div key={a + u + b} className={w}>{a}<span className="underline underline-offset-2">{u}</span>{b}</div>
        ))}
        <div className="ml-auto mr-[5px] text-[17px] font-bold leading-[18px] tracking-[2px] text-[#262626] font-['Open_Sans',sans-serif]">c<span className="relative">a<span className="absolute left-[2px] top-[3px] h-[2px] w-[7px] bg-[#c8333a]" /></span>dence</div>
      </div>
      <div className="h-[3px] bg-[#bb1013]" />

      <div className={`h-[34px] w-[1089px] ${bar}`}>
        <Group w="w-[107px]">{row1a.map((ic, i) => <Slot key={i}>{ic}</Slot>)}</Group>
        <Group w="w-[259px]">
          <Slot>{moveIcon}</Slot><Slot>{copyIcon}</Slot><Slot>{deleteIcon}</Slot><Slot><Curl /></Slot>
          <Slot w="w-[14px]"><Drop /></Slot><Slot><Curl flip /></Slot><Slot w="w-[14px]"><Drop c="#ababab" /></Slot>
          <Slot w="w-[32px]">{pinRound}</Slot><Slot w="w-[27px]">{pinSlant}</Slot>
        </Group>
        <Group w="w-[293px]">{zoomIcons.map((ic, i) => <Slot key={i}>{ic}</Slot>)}</Group>
        <Group w="w-[200px]">{gridIcons.map((ic, i) => <Slot key={i}>{ic}</Slot>)}</Group>
        <Group w="w-[230px]" last>
          {infoIcons.map((ic, i) => <Slot key={i}>{ic}</Slot>)}
          <div className="relative flex h-[31px] w-[31px] shrink-0 items-center justify-center border border-black bg-[#f3dcdc]">
            {addPinIcon}
            <div className="absolute left-[13px] top-[34px] z-10 h-[18px] w-[48px] whitespace-nowrap border border-black bg-[#ffffe6] text-center text-[12px] leading-[16px] shadow-[3px_3px_2px_rgba(0,0,0,0.45)]">Add Pin</div>
          </div>
          <Slot>{refdesIcon}</Slot><Slot>{hdlIcon}</Slot>
        </Group>
      </div>
      <div className={`h-[35px] w-[720px] ${bar}`}>
        <Group w="w-[169px]">{modeIcons.map((ic, i) => <Slot key={i}>{ic}</Slot>)}</Group>
        <Group w="w-[293px]">{shapeIcons.map((ic, i) => <Slot key={i}>{ic}</Slot>)}</Group>
        <Group w="w-[107px]">{dimIcons.map((ic, i) => <Slot key={i}>{ic}</Slot>)}</Group>
        <Group w="w-[45px]"><Slot>{cameraIcon}</Slot></Group>
        <Group w="w-[106px]" last>{helpIcons.map((ic, i) => <Slot key={i}>{ic}</Slot>)}</Group>
      </div>

      <div className="flex h-[908px] pt-[1px]">
        <div className="w-[35px]">
          <VGroup icons={routeIcons} h="h-[137px]" />
          <VGroup icons={drawIcons} h="h-[137px]" />
        </div>
        <div className="w-[1582px]">
          <div className="w-[1577px] border border-[#8a8a8a] border-b-2 border-b-white"><Canvas /></div>
          <div className="mt-[5px] flex gap-[6px] pl-[1px]">
            <Command />
            <WorldView />
          </div>
        </div>
        <Options />
      </div>

      <Status />
      <Taskbar />
    </div>
  );
}
